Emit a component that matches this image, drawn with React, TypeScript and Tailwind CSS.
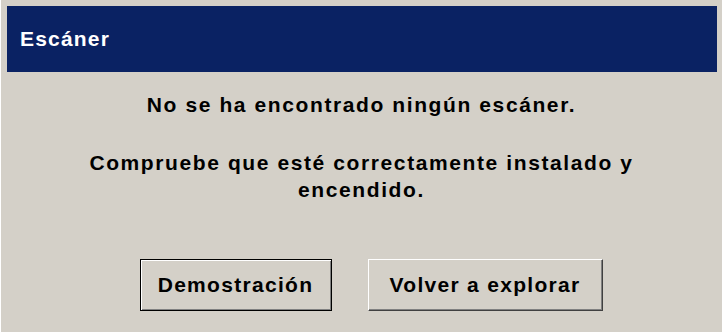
export default function App() {
  return (
    <div
      className="flex h-[332px] w-[722px] flex-col border-l border-white bg-[#d4d0c8] text-black"
      style={{ fontFamily: '"Liberation Sans", Arial, sans-serif' }}
    >
      <div className="mt-[6px] ml-[6px] mr-[5px] flex h-[66px] items-center bg-[#0a2263] pl-[13px]">
        <h1 className="text-[21px] font-bold tracking-[1.2px] text-white">Escáner</h1>
      </div>

      <div className="mt-[19px] flex flex-col items-center text-center text-[21px] font-bold leading-[27px] tracking-[1.6px]">
        <p>No se ha encontrado ningún escáner.</p>
        <p className="mt-[31px] whitespace-nowrap">
          Compruebe que esté correctamente instalado y
          <br />
          encendido.
        </p>
      </div>

      <div className="mt-[56px] flex justify-center gap-[36px] pl-[19px]">
        <button
          type="button"
          className="h-[52px] w-[192px] border border-black bg-[#d4d0c8] text-[21px] font-bold tracking-[1.3px] shadow-[inset_1px_1px_0_#ffffff,inset_-1px_-1px_0_#808080]"
        >
          Demostración
        </button>
        <button
          type="button"
          className="h-[52px] w-[235px] border-t border-l border-t-white border-l-white border-r border-b border-r-[#404040] border-b-[#404040] bg-[#d4d0c8] text-[21px] font-bold tracking-[1.3px] shadow-[inset_-1px_-1px_0_#808080]"
        >
          Volver a explorar
        </button>
      </div>
    </div>
  );
}
